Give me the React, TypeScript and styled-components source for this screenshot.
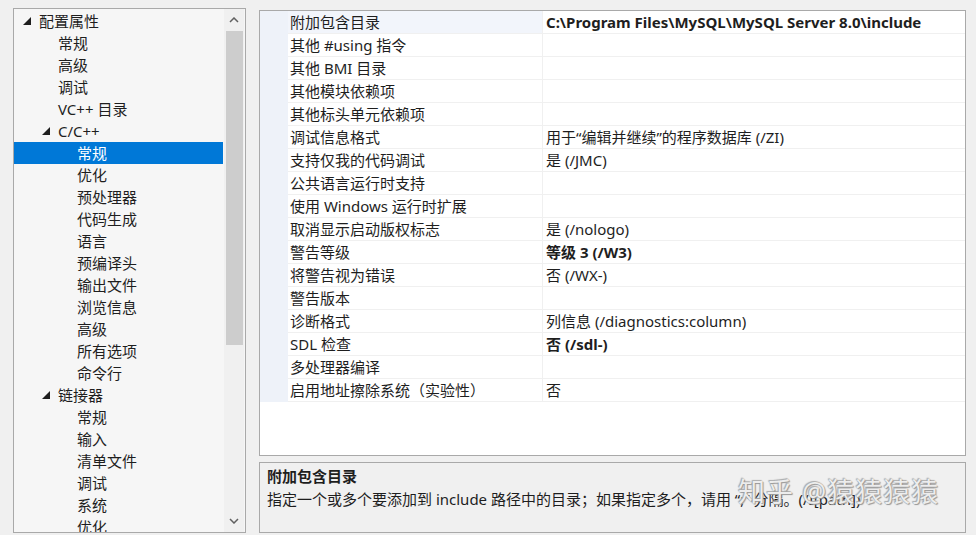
import React from "react";
import styled, { createGlobalStyle } from "styled-components";

const Global = createGlobalStyle`
  html, body { margin: 0; padding: 0; background: #f0f0f0; }
  body { font-family: "Segoe UI", "Noto Sans", "Noto Sans CJK SC", sans-serif; font-size: 15px; color: #1e1e1e; }
  * { box-sizing: border-box; }
`;

const Page = styled.div`
  width: 976px;
  height: 535px;
  display: flex;
  align-items: flex-start;
  padding: 8px 0 0 13px;
  gap: 13px;
  overflow: hidden;
`;

const TreePanel = styled.div`
  width: 233px;
  height: 525px;
  border: 1px solid #a9a9a9;
  background: #f6f6f6;
  display: flex;
  overflow: hidden;
`;

const TreeList = styled.div`
  flex: 1;
  overflow: hidden;
  padding-top: 1px;
`;

const TreeRow = styled.div<{ $level: number; $selected?: boolean }>`
  height: 22px;
  display: flex;
  align-items: center;
  padding-left: ${(p) => 9 + p.$level * 19}px;
  background: ${(p) => (p.$selected ? "#0078d7" : "transparent")};
  color: ${(p) => (p.$selected ? "#ffffff" : "#1e1e1e")};
  white-space: nowrap;
  line-height: 22px;
`;

const Expander = styled.span`
  width: 16px;
  flex: none;
  display: flex;
  align-items: center;
  height: 22px;
`;

const Scrollbar = styled.div`
  width: 20px;
  flex: none;
  margin-left: 1px;
  margin-right: 1px;
  background: #f0f0f0;
  display: flex;
  flex-direction: column;
  align-items: center;
`;

const ScrollArrow = styled.div`
  height: 22px;
  width: 20px;
  display: flex;
  align-items: center;
  justify-content: center;
`;

const ScrollThumb = styled.div`
  width: 17px;
  height: 314px;
  background: #cdcdcd;
`;

const ScrollTrack = styled.div`
  flex: 1;
`;

const RightColumn = styled.div`
  width: 707px;
  margin-top: 2px;
  display: flex;
  flex-direction: column;
  gap: 6px;
`;

const Grid = styled.div`
  height: 446px;
  border: 1px solid #a9a9a9;
  background: #ffffff;
  overflow: hidden;
`;

const PropRow = styled.div`
  display: grid;
  grid-template-columns: 28px 255px 1fr;
  height: 23px;
  line-height: 23px;
`;

const Gutter = styled.div`
  background: #eef2f9;
`;

const NameCell = styled.div<{ $active?: boolean }>`
  padding-left: 2px;
  border-bottom: 1px solid #f0f0f0;
  border-right: 1px solid #f0f0f0;
  background: ${(p) => (p.$active ? "#f2f5fb" : "#ffffff")};
  white-space: nowrap;
  overflow: hidden;
`;

const ValueCell = styled.div<{ $bold?: boolean }>`
  padding-left: 3px;
  border-bottom: 1px solid #f0f0f0;
  font-weight: ${(p) => (p.$bold ? 700 : 400)};
  white-space: nowrap;
  overflow: hidden;
`;

const Desc = styled.div`
  position: relative;
  height: 71px;
  border: 1px solid #a9a9a9;
  background: #f0f0f0;
  padding: 2px 7px;
  line-height: 23px;
`;

const DescTitle = styled.div`
  font-weight: 700;
`;

const DescText = styled.div`
  white-space: nowrap;
`;

const Watermark = styled.div`
  position: absolute;
  left: 478px;
  top: 14px;
  font-size: 27px;
  line-height: 30px;
  color: rgba(255, 255, 255, 0.85);
  text-shadow: 0 0 1px #8a8a8a, 1px 1px 1px #9a9a9a, -1px -1px 1px #b0b0b0;
  white-space: nowrap;
  letter-spacing: 1px;
`;

const Triangle = () => (
  <svg width="8" height="8" viewBox="0 0 8 8">
    <polygon points="8,0 8,8 0,8" fill="#1e1e1e" />
  </svg>
);

const Chevron = ({ up }: { up?: boolean }) => (
  <svg width="10" height="6" viewBox="0 0 10 6">
    <polyline
      points={up ? "1,5 5,1 9,5" : "1,1 5,5 9,1"}
      fill="none"
      stroke="#606060"
      strokeWidth="1.5"
    />
  </svg>
);

type TreeItem = { label: string; level: number; expanded?: boolean; selected?: boolean };

const tree: TreeItem[] = [
  { label: "配置属性", level: 0, expanded: true },
  { label: "常规", level: 1 },
  { label: "高级", level: 1 },
  { label: "调试", level: 1 },
  { label: "VC++ 目录", level: 1 },
  { label: "C/C++", level: 1, expanded: true },
  { label: "常规", level: 2, selected: true },
  { label: "优化", level: 2 },
  { label: "预处理器", level: 2 },
  { label: "代码生成", level: 2 },
  { label: "语言", level: 2 },
  { label: "预编译头", level: 2 },
  { label: "输出文件", level: 2 },
  { label: "浏览信息", level: 2 },
  { label: "高级", level: 2 },
  { label: "所有选项", level: 2 },
  { label: "命令行", level: 2 },
  { label: "链接器", level: 1, expanded: true },
  { label: "常规", level: 2 },
  { label: "输入", level: 2 },
  { label: "清单文件", level: 2 },
  { label: "调试", level: 2 },
  { label: "系统", level: 2 },
  { label: "优化", level: 2 },
];

type Prop = { name: string; value?: string; bold?: boolean };

const props: Prop[] = [
  { name: "附加包含目录", value: "C:\\Program Files\\MySQL\\MySQL Server 8.0\\include", bold: true },
  { name: "其他 #using 指令" },
  { name: "其他 BMI 目录" },
  { name: "其他模块依赖项" },
  { name: "其他标头单元依赖项" },
  { name: "调试信息格式", value: "用于“编辑并继续”的程序数据库 (/ZI)" },
  { name: "支持仅我的代码调试", value: "是 (/JMC)" },
  { name: "公共语言运行时支持" },
  { name: "使用 Windows 运行时扩展" },
  { name: "取消显示启动版权标志", value: "是 (/nologo)" },
  { name: "警告等级", value: "等级 3 (/W3)", bold: true },
  { name: "将警告视为错误", value: "否 (/WX-)" },
  { name: "警告版本" },
  { name: "诊断格式", value: "列信息 (/diagnostics:column)" },
  { name: "SDL 检查", value: "否 (/sdl-)", bold: true },
  { name: "多处理器编译" },
  { name: "启用地址擦除系统（实验性）", value: "否" },
];

export default function App() {
  return (
    <>
      <Global />
      <Page>
        <TreePanel>
          <TreeList>
            {tree.map((t, i) => (
              <TreeRow key={i} $level={t.level} $selected={t.selected}>
                <Expander>{t.expanded ? <Triangle /> : null}</Expander>
                {t.label}
              </TreeRow>
            ))}
          </TreeList>
          <Scrollbar>
            <ScrollArrow>
              <Chevron up />
            </ScrollArrow>
            <ScrollThumb />
            <ScrollTrack />
            <ScrollArrow>
              <Chevron />
            </ScrollArrow>
          </Scrollbar>
        </TreePanel>
        <RightColumn>
          <Grid>
            {props.map((p, i) => (
              <PropRow key={i}>
                <Gutter />
                <NameCell $active={i === 0}>{p.name}</NameCell>
                <ValueCell $bold={p.bold}>{p.value ?? ""}</ValueCell>
              </PropRow>
            ))}
          </Grid>
          <Desc>
            <DescTitle>附加包含目录</DescTitle>
            <DescText>
              指定一个或多个要添加到 include 路径中的目录；如果指定多个，请用 “;” 分隔。(/I[path])
            </DescText>
            <Watermark>知乎 @猿猿猿猿</Watermark>
          </Desc>
        </RightColumn>
      </Page>
    </>
  );
}
